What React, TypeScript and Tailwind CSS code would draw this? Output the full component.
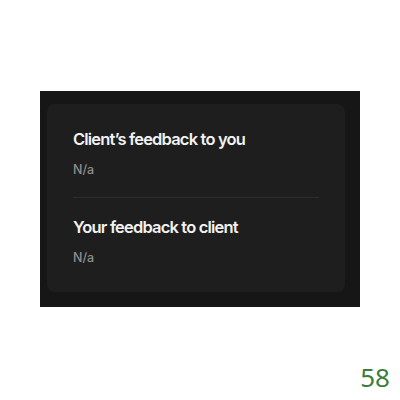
export default function App() {
  const sections = [
    { title: "Client’s feedback to you", body: "N/a" },
    { title: "Your feedback to client", body: "N/a" },
  ];

  return (
    <div className="relative h-[400px] w-[400px] bg-white pt-[91px] pl-[40px]">
      <div className="h-[216px] w-[320px] bg-[#161616] pt-[13px] pl-[7px]">
        <div className="h-[188px] w-[298px] rounded-lg bg-[#1e1e1e] px-[26px] pt-[23px] font-['Inter',sans-serif]">
          {sections.map((s, i) => (
            <div key={s.title}>
              {i > 0 && <div className="h-px bg-[#2e2e2e]" />}
              <div className={i > 0 ? "pt-[17px]" : "pb-[19px]"}>
                <h2 className="text-[16.5px] leading-6 font-semibold tracking-[-0.05em] text-[#f2f2f2]">
                  {s.title}
                </h2>
                <p className="mt-[11px] text-[12.5px] leading-4 font-medium text-[#8e8e8e]">
                  {s.body}
                </p>
              </div>
            </div>
          ))}
        </div>
      </div>
      <span className="absolute right-[10px] bottom-[10px] font-['Noto_Sans',sans-serif] text-[26px] leading-none text-[#3b7d3b]">
        58
      </span>
    </div>
  );
}
